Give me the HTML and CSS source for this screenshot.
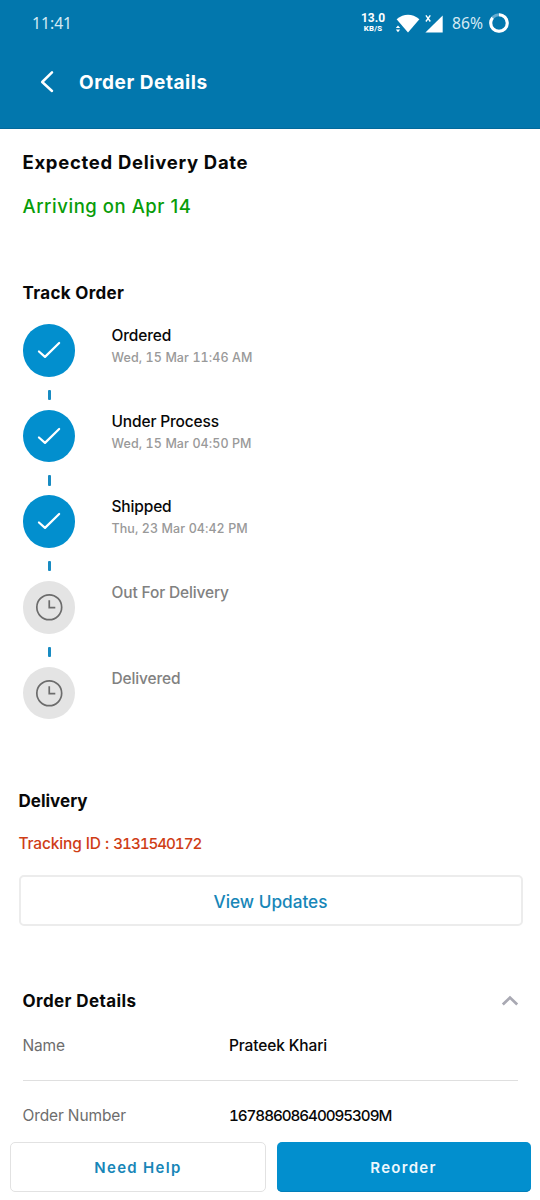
FILE: index.html
```html
<!DOCTYPE html>
<html lang="en">
<head>
<meta charset="utf-8">
<title>Order Details</title>
<link rel="stylesheet" href="styles.css">
</head>
<body>
<svg class="defs" width="0" height="0">
  <symbol id="check" viewBox="0 0 52 52"><path d="M15.8 27.2 21.8 32.6 35.8 18.8" fill="none" stroke="#fff" stroke-width="2.2" stroke-linecap="round" stroke-linejoin="round"/></symbol>
  <symbol id="clock" viewBox="0 0 52 52"><g fill="none" stroke="#6c6c6c" stroke-width="1.7"><circle cx="26" cy="26" r="12.3"/><path d="M26 19v7.3h6"/></g></symbol>
</svg>
<div class="screen">
  <header class="top">
    <div class="status">
      <span class="time">11:41</span>
      <span class="speed"><b>13.0</b><i>KB/S</i></span>
      <svg class="signals" width="50" height="22" viewBox="0 0 50 22" fill="#fff">
        <path d="M2.6 7.3Q14-1.6 25.4 7.3L14 20.4Z"/>
        <path d="M1.8 16 4 13.4 6.2 16ZM1.8 17.6 4 20.2 6.2 17.6Z"/>
        <path d="M48.7 3.6V20.4H31.4Z"/>
        <path d="M31.9 3.3l4.4 6.2M36.3 3.3l-4.4 6.2" stroke="#fff" stroke-width="1.4"/>
      </svg>
      <span class="percent">86%</span>
      <svg class="ring" width="22" height="22" viewBox="0 0 22 22" fill="none" stroke-width="3"><circle cx="11" cy="11" r="8.3" stroke="#63abd0"/><circle cx="11" cy="11" r="8.3" stroke="#fff" pathLength="100" stroke-dasharray="86 14" transform="rotate(-90 11 11)"/></svg>
    </div>
    <div class="appbar">
      <svg width="16" height="24" viewBox="0 0 16 24" fill="none" stroke="#fff" stroke-width="2.5" stroke-linecap="round" stroke-linejoin="round"><path d="M13 2.3 3.2 12l9.8 9"/></svg>
      <h1>Order Details</h1>
    </div>
  </header>

  <main class="content">
    <h2 class="expected">Expected Delivery Date</h2>
    <p class="arriving">Arriving on Apr 14</p>

    <h2 class="track">Track Order</h2>
    <ol class="steps">
      <li class="step"><svg class="dot"><use href="#check"/></svg><div><h3>Ordered</h3><p>Wed, 15 Mar 11:46 AM</p></div></li>
      <li class="step"><svg class="dot"><use href="#check"/></svg><div><h3>Under Process</h3><p>Wed, 15 Mar 04:50 PM</p></div></li>
      <li class="step"><svg class="dot"><use href="#check"/></svg><div><h3>Shipped</h3><p>Thu, 23 Mar 04:42 PM</p></div></li>
      <li class="step pending"><svg class="dot"><use href="#clock"/></svg><div><h3>Out For Delivery</h3></div></li>
      <li class="step pending"><svg class="dot"><use href="#clock"/></svg><div><h3>Delivered</h3></div></li>
    </ol>

    <section class="delivery">
      <h2>Delivery</h2>
      <p class="tracking">Tracking ID : <span class="number">3131540172</span></p>
      <button class="updates">View Updates</button>
    </section>

    <section class="details">
      <div class="details-head">
        <h2>Order Details</h2>
        <svg width="18" height="12" viewBox="0 0 18 12" fill="none" stroke="#a9a9b3" stroke-width="2.8"><path d="M1.8 9.4 9 2.6l7.2 6.8"/></svg>
      </div>
      <dl>
        <div class="row"><dt>Name</dt><dd>Prateek Khari</dd></div>
        <div class="row"><dt>Order Number</dt><dd class="number">16788608640095309M</dd></div>
      </dl>
    </section>
  </main>

  <footer class="actions">
    <button class="help">Need Help</button>
    <button class="reorder">Reorder</button>
  </footer>
</div>
</body>
</html>
```

FILE: styles.css
```css
* { box-sizing: border-box; margin: 0; padding: 0; }
body { background: #fff; font-family: Inter, "Liberation Sans", sans-serif; color: #080808; }
.defs { display: block; }
.screen { display: flex; flex-direction: column; width: 540px; height: 1200px; overflow: hidden; }
h1, h2, h3 { font-weight: 700; white-space: nowrap; }
button { font-family: inherit; cursor: pointer; }

.top { flex: none; height: 129px; background: #0277ad; color: #fff; border-bottom: 1px solid #02699b; }
.status { display: flex; align-items: center; height: 45px; padding: 0 30px 0 32px; font-family: "Noto Sans", sans-serif; font-size: 15.7px; }
.time { color: #d5eaf4; font-weight: 400; }
.speed { display: flex; flex-direction: column; align-items: center; width: 26px; margin-left: auto; font-family: Roboto, sans-serif; }
.speed b { font-size: 12px; line-height: 12px; font-weight: 700; }
.speed i { font-size: 7.8px; line-height: 9px; font-style: normal; font-weight: 800; letter-spacing: .2px; }
.signals { margin: 0 8px 0 8px; }
.percent { width: 33px; color: #d5eaf4; }
.ring { margin-left: 3px; }
.appbar { display: flex; align-items: center; height: 74px; padding-left: 39px; gap: 24px; }
.appbar h1 { font-size: 19px; letter-spacing: .55px; }

.content { flex: 1; min-height: 0; overflow: hidden; }
.expected { padding: 20px 22.5px 0; font-size: 18.5px; line-height: 26px; letter-spacing: .7px; }
.arriving { padding: 18px 22.5px 0; font-size: 18.5px; line-height: 26px; font-weight: 500; letter-spacing: .55px; color: #089c08; }
.track { padding: 61px 22.5px 0; font-size: 17px; line-height: 26px; letter-spacing: .32px; }
.steps { list-style: none; padding: 18px 22.5px 0; }
.step { display: flex; gap: 36.5px; height: 85.7px; position: relative; }
.dot { flex: none; width: 52.5px; height: 52.5px; border-radius: 50%; background: #028fce; }
.pending .dot { background: #e4e4e4; }
.step:not(:last-child)::after { content: ""; position: absolute; left: 25.5px; top: 65.5px; width: 3px; height: 10.5px; background: #188bc2; border-radius: 1px; }
.step h3 { font-size: 15.5px; line-height: 23px; font-weight: 500; letter-spacing: -.15px; }
.step p { font-size: 12.5px; line-height: 21px; font-weight: 500; letter-spacing: .08px; font-variant-numeric: tabular-nums; color: #999; white-space: nowrap; }
.pending h3 { color: #818181; }

.delivery { padding: 36px 18.5px 0; }
.delivery h2, .details h2 { font-size: 17px; line-height: 26px; }
.details h2 { letter-spacing: .4px; }
.tracking { margin-top: 17px; font-size: 15.5px; line-height: 26px; font-weight: 500; letter-spacing: -.15px; color: #cf3d16; }
.number { font-size: 15.2px; font-variant-numeric: tabular-nums; letter-spacing: -1.05px; }
.updates { display: block; width: 504px; height: 51px; margin-top: 18px; padding-top: 1px; background: #fff; border: 2px solid #ececec; border-radius: 5px; color: #1786b8; font-size: 17.2px; font-weight: 500; }

.details { padding: 62px 21px 0 22.5px; }
.details-head { display: flex; justify-content: space-between; align-items: center; }
.row { display: flex; height: 69px; margin-right: 1px; padding-top: 22px; font-size: 15.5px; line-height: 20px; font-weight: 500; letter-spacing: -.13px; white-space: nowrap; }
.row:first-child { height: 67px; border-bottom: 1px solid #dfdfdf; }
.row + .row { padding-top: 25px; }
dt { width: 206.5px; color: #6d6d6d; font-weight: 400; }

.actions { flex: none; display: flex; gap: 10.5px; height: 58px; padding: 0 9.5px 8px 10px; }
.actions button { flex: 1; border-radius: 5px; font-size: 15px; font-weight: 600; letter-spacing: 1.3px; }
.help { background: #fff; border: 1.5px solid #e2e2e2; color: #1786b8; }
.reorder { background: #028fce; border: 0; box-shadow: inset 0 -1px #027fba; color: #eef8fd; }
```
